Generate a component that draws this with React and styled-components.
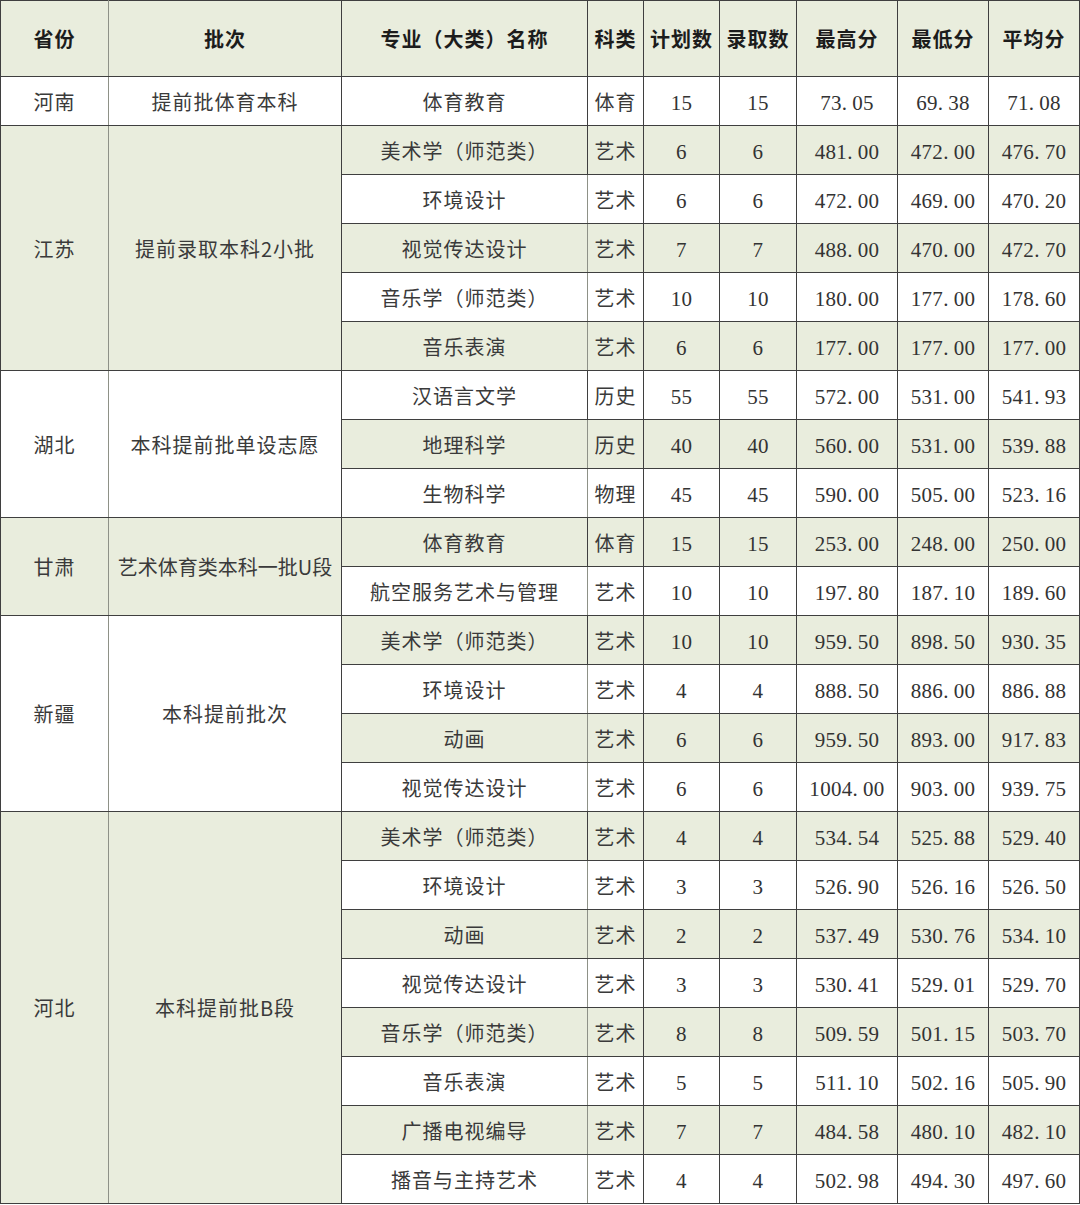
import React from "react";
import styled, { createGlobalStyle } from "styled-components";

const Global = createGlobalStyle`
  html, body { margin: 0; padding: 0; background: #ffffff; }
  body { font-family: "Noto Sans CJK SC", "Liberation Serif", serif; }
`;

const GREEN = "#e9eddd";
const LINE = "#3f3f3f";

const Table = styled.table`
  width: 1079px;
  border-collapse: collapse;
  table-layout: fixed;
  border: 1px solid ${LINE};
`;

const Row = styled.tr`
  height: ${(p) => (p.$head ? 76 : 49)}px;
`;

const Cell = styled.td`
  border: 1px solid ${LINE};
  background: ${(p) => (p.$shade ? GREEN : "#ffffff")};
  color: #3a3a3a;
  font-family: "Noto Sans CJK SC", "Noto Sans CJK TC", sans-serif;
  font-size: 20px;
  font-weight: 400;
  letter-spacing: 1px;
  text-align: center;
  vertical-align: middle;
  padding: 0;
  white-space: nowrap;
  overflow: hidden;
  &:first-child {
    border-right-color: #8e9187;
  }
`;

const HeadCell = styled.th`
  border: 1px solid ${LINE};
  background: ${GREEN};
  color: #1c1c1c;
  font-family: "Noto Sans CJK SC", "Noto Sans CJK TC", sans-serif;
  font-size: 20px;
  font-weight: 700;
  letter-spacing: 1px;
  text-align: center;
  vertical-align: middle;
  padding: 0;
  white-space: nowrap;
  &:first-child {
    border-right-color: #8e9187;
  }
`;

const NumText = styled.span`
  font-family: "Liberation Serif", "DejaVu Serif", serif;
  font-size: 21px;
  letter-spacing: 0.3px;
  color: #333333;
`;

const Dot = styled.span`
  display: inline-block;
  width: 0.5em;
  text-align: left;
`;

function Num({ v }) {
  const s = String(v);
  const parts = s.split(".");
  return (
    <NumText>
      {parts[0]}
      {parts.length > 1 && (
        <>
          <Dot>.</Dot>
          {parts[1]}
        </>
      )}
    </NumText>
  );
}

const cols = [108, 233, 246, 56, 76, 77, 101, 91, 91];
const headers = ["省份", "批次", "专业（大类）名称", "科类", "计划数", "录取数", "最高分", "最低分", "平均分"];

const groups = [
  {
    prov: "河南",
    batch: "提前批体育本科",
    rows: [["体育教育", "体育", "15", "15", "73.05", "69.38", "71.08"]],
  },
  {
    prov: "江苏",
    batch: "提前录取本科2小批",
    rows: [
      ["美术学（师范类）", "艺术", "6", "6", "481.00", "472.00", "476.70"],
      ["环境设计", "艺术", "6", "6", "472.00", "469.00", "470.20"],
      ["视觉传达设计", "艺术", "7", "7", "488.00", "470.00", "472.70"],
      ["音乐学（师范类）", "艺术", "10", "10", "180.00", "177.00", "178.60"],
      ["音乐表演", "艺术", "6", "6", "177.00", "177.00", "177.00"],
    ],
  },
  {
    prov: "湖北",
    batch: "本科提前批单设志愿",
    rows: [
      ["汉语言文学", "历史", "55", "55", "572.00", "531.00", "541.93"],
      ["地理科学", "历史", "40", "40", "560.00", "531.00", "539.88"],
      ["生物科学", "物理", "45", "45", "590.00", "505.00", "523.16"],
    ],
  },
  {
    prov: "甘肃",
    batch: "艺术体育类本科一批U段",
    rows: [
      ["体育教育", "体育", "15", "15", "253.00", "248.00", "250.00"],
      ["航空服务艺术与管理", "艺术", "10", "10", "197.80", "187.10", "189.60"],
    ],
  },
  {
    prov: "新疆",
    batch: "本科提前批次",
    rows: [
      ["美术学（师范类）", "艺术", "10", "10", "959.50", "898.50", "930.35"],
      ["环境设计", "艺术", "4", "4", "888.50", "886.00", "886.88"],
      ["动画", "艺术", "6", "6", "959.50", "893.00", "917.83"],
      ["视觉传达设计", "艺术", "6", "6", "1004.00", "903.00", "939.75"],
    ],
  },
  {
    prov: "河北",
    batch: "本科提前批B段",
    rows: [
      ["美术学（师范类）", "艺术", "4", "4", "534.54", "525.88", "529.40"],
      ["环境设计", "艺术", "3", "3", "526.90", "526.16", "526.50"],
      ["动画", "艺术", "2", "2", "537.49", "530.76", "534.10"],
      ["视觉传达设计", "艺术", "3", "3", "530.41", "529.01", "529.70"],
      ["音乐学（师范类）", "艺术", "8", "8", "509.59", "501.15", "503.70"],
      ["音乐表演", "艺术", "5", "5", "511.10", "502.16", "505.90"],
      ["广播电视编导", "艺术", "7", "7", "484.58", "480.10", "482.10"],
      ["播音与主持艺术", "艺术", "4", "4", "502.98", "494.30", "497.60"],
    ],
  },
];

const BatchText = styled.span`
  letter-spacing: ${(p) => (p.$tight ? "0" : "1px")};
`;

export default function App() {
  let idx = 0;
  const body = [];
  groups.forEach((g, gi) => {
    const groupShade = gi % 2 === 1;
    g.rows.forEach((r, ri) => {
      const shade = idx % 2 === 1;
      idx += 1;
      body.push(
        <Row key={`${gi}-${ri}`}>
          {ri === 0 && (
            <>
              <Cell rowSpan={g.rows.length} $shade={groupShade}>{g.prov}</Cell>
              <Cell rowSpan={g.rows.length} $shade={groupShade}>
                <BatchText $tight={g.batch.length > 10}>{g.batch}</BatchText>
              </Cell>
            </>
          )}
          <Cell $shade={shade}>{r[0]}</Cell>
          <Cell $shade={shade}>{r[1]}</Cell>
          <Cell $shade={shade}><Num v={r[2]} /></Cell>
          <Cell $shade={shade}><Num v={r[3]} /></Cell>
          <Cell $shade={shade}><Num v={r[4]} /></Cell>
          <Cell $shade={shade}><Num v={r[5]} /></Cell>
          <Cell $shade={shade}><Num v={r[6]} /></Cell>
        </Row>
      );
    });
  });

  return (
    <>
      <Global />
      <Table>
        <colgroup>
          {cols.map((w, i) => (
            <col key={i} style={{ width: w }} />
          ))}
        </colgroup>
        <thead>
          <Row $head>
            {headers.map((h) => (
              <HeadCell key={h}>{h}</HeadCell>
            ))}
          </Row>
        </thead>
        <tbody>{body}</tbody>
      </Table>
    </>
  );
}
